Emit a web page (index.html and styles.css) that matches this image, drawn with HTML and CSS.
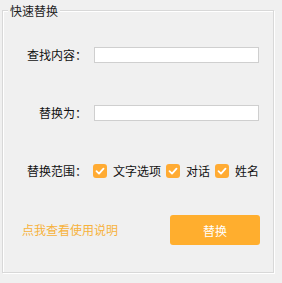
FILE: index.html
```html
<!DOCTYPE html>
<html lang="zh-CN">
<head>
    <meta charset="UTF-8">
    <title>快速替换</title>
    <link rel="stylesheet" href="styles.css">
</head>
<body>

<div class="group">
    <span class="group-title">快速替换</span>

    <div class="form">
        <label class="form-label" for="find">查找内容：</label>
        <input class="form-input" type="text" id="find">

        <label class="form-label row-replace" for="replace">替换为：</label>
        <input class="form-input row-replace" type="text" id="replace">

        <span class="form-label row-scope">替换范围：</span>
        <div class="scope row-scope">
            <label class="check"><span class="check-box"><svg viewBox="0 0 14 14"><path d="M3.5 7.2 L6 9.6 L10.5 4.6" /></svg></span>文字选项</label>
            <label class="check"><span class="check-box"><svg viewBox="0 0 14 14"><path d="M3.5 7.2 L6 9.6 L10.5 4.6" /></svg></span>对话</label>
            <label class="check"><span class="check-box"><svg viewBox="0 0 14 14"><path d="M3.5 7.2 L6 9.6 L10.5 4.6" /></svg></span>姓名</label>
        </div>
    </div>

    <div class="actions">
        <a class="help-link" href="#">点我查看使用说明</a>
        <button class="replace-btn" type="button">替换</button>
    </div>
</div>

</body>
</html>
```

FILE: styles.css
```css
body {
    margin: 0;
    background-color: #f0f0f0;
    font-family: "Noto Sans CJK SC", "Noto Sans", sans-serif;
    font-size: 12px;
    color: #111;
    width: 282px;
    height: 283px;
    overflow: hidden;
}

.group {
    box-sizing: border-box;
    width: 272px;
    height: 263px;
    margin: 10px 0 0 2px;
    border: 1px solid #d8d8d8;
    box-shadow: inset 1px 1px 0 #fff, 1px 1px 0 #fff;
}

.group-title {
    display: block;
    width: fit-content;
    height: 12px;
    margin: -6px 0 0 5px;
    padding: 0 2px;
    line-height: 12px;
    background-color: #f0f0f0;
    color: #222;
}

.form {
    display: grid;
    grid-template-columns: 84px 165px;
    column-gap: 7px;
    margin-top: 30px;
    align-items: center;
}

.form-label {
    text-align: right;
    line-height: 16px;
    color: #111;
    white-space: nowrap;
}

.form-input {
    box-sizing: border-box;
    width: 165px;
    height: 16px;
    margin: 0;
    padding: 0 3px;
    border: 1px solid #cfcfcf;
    background-color: #fff;
    font: inherit;
    outline: none;
}

.row-replace {
    margin-top: 42px;
}

.row-scope {
    margin-top: 42px;
}

.scope {
    display: flex;
    align-items: center;
    margin-left: -1px;
    white-space: nowrap;
}

.check {
    display: flex;
    align-items: center;
    line-height: 16px;
    margin-right: 5px;
}

.check:last-child {
    margin-right: 0;
}

.check-box {
    flex: none;
    width: 14px;
    height: 14px;
    border-radius: 3px;
    background-color: #ffab33;
    margin-right: 6px;
    display: flex;
}

.check-box svg {
    width: 14px;
    height: 14px;
}

.check-box path {
    fill: none;
    stroke: #fff;
    stroke-width: 1.8;
    stroke-linecap: round;
    stroke-linejoin: round;
}

.actions {
    display: flex;
    align-items: center;
    justify-content: space-between;
    margin: 36px 13px 0 19px;
}

.help-link {
    color: #f7b23b;
    text-decoration: none;
    line-height: 16px;
}

.replace-btn {
    width: 90px;
    height: 30px;
    border: none;
    border-radius: 3px;
    background-color: #ffae2e;
    color: #fff;
    font: inherit;
    padding: 0;
    cursor: pointer;
}
```
